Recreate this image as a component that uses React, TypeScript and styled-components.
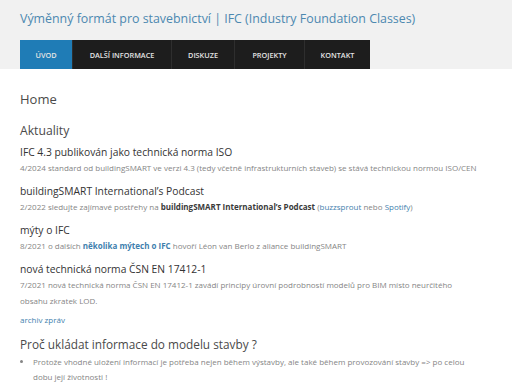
import React from "react";
import styled, { createGlobalStyle } from "styled-components";

const Global = createGlobalStyle`
  html, body { margin: 0; padding: 0; background: #fff; }
  body { font-family: "Open Sans", "Liberation Sans", sans-serif; }
`;

const Header = styled.header`
  background: #f1f1f1;
  padding: 9px 20px 0 20px;
`;

const SiteTitle = styled.h1`
  margin: 0;
  font-weight: 400;
  font-size: 12.4px;
  line-height: 20px;
  color: #4c88b0;
  white-space: nowrap;
`;

const Nav = styled.nav`
  display: flex;
  margin-top: 11px;
  width: fit-content;
  background: #1d1d1d;
`;

const NavItem = styled.a<{ $active?: boolean; $w: number }>`
  display: flex;
  align-items: center;
  justify-content: center;
  width: ${(p) => p.$w}px;
  height: 29px;
  box-sizing: border-box;
  font-size: 7.3px;
  font-weight: 600;
  color: #e4e4e4;
  background: ${(p) => (p.$active ? "#1f7cb6" : "#1d1d1d")};
  border-left: 1px solid ${(p) => (p.$active ? "#1f7cb6" : "#2e2e2e")};
  &:first-child { border-left: none; }
`;

const Main = styled.main`
  padding: 21px 32px 0 20px;
`;

const H2 = styled.h2<{ $mt?: number; $size?: number }>`
  margin: ${(p) => p.$mt ?? 0}px 0 0 0;
  font-weight: 400;
  font-size: ${(p) => p.$size ?? 13}px;
  line-height: 18px;
  color: #4a4a4a;
`;

const NewsTitle = styled.h3<{ $mt?: number }>`
  margin: ${(p) => p.$mt ?? 0}px 0 0 0;
  font-weight: 400;
  font-size: 10.3px;
  line-height: 14px;
  color: #333;
`;

const NewsText = styled.p`
  margin: 1px 0 0 0;
  font-size: 8px;
  line-height: 16px;
  color: #858585;
`;

const Link = styled.a<{ $bold?: boolean }>`
  color: #3f7fae;
  text-decoration: none;
  font-weight: ${(p) => (p.$bold ? 700 : 400)};
`;

const Strong = styled.b`
  color: #3a3a3a;
  font-weight: 700;
`;

const Archive = styled.p`
  margin: 3px 0 0 0;
  font-size: 8px;
  line-height: 16px;
`;

const List = styled.ul`
  margin: 1px 0 0 0;
  padding-left: 13px;
  font-size: 8px;
  line-height: 15px;
  color: #858585;
`;

const navItems = [
  { label: "ÚVOD", w: 52, active: true },
  { label: "DALŠÍ INFORMACE", w: 99 },
  { label: "DISKUZE", w: 63 },
  { label: "PROJEKTY", w: 70 },
  { label: "KONTAKT", w: 66 },
];

export default function App() {
  return (
    <>
      <Global />
      <Header>
        <SiteTitle>Výměnný formát pro stavebnictví | IFC (Industry Foundation Classes)</SiteTitle>
        <Nav>
          {navItems.map((n) => (
            <NavItem key={n.label} $active={n.active} $w={n.w}>
              {n.label}
            </NavItem>
          ))}
        </Nav>
      </Header>
      <Main>
        <H2>Home</H2>
        <H2 $mt={14} $size={12.2}>Aktuality</H2>
        <NewsTitle $mt={5}>IFC 4.3 publikován jako technická norma ISO</NewsTitle>
        <NewsText>
          4/2024 standard od buildingSMART ve verzi 4.3 (tedy včetně infrastrukturních staveb) se stává technickou normou ISO/CEN
        </NewsText>
        <NewsTitle $mt={8}>buildingSMART International’s Podcast</NewsTitle>
        <NewsText>
          2/2022 sledujte zajímavé postřehy na <Strong>buildingSMART International’s Podcast</Strong> (
          <Link>buzzsprout</Link> nebo <Link>Spotify</Link>)
        </NewsText>
        <NewsTitle $mt={8}>mýty o IFC</NewsTitle>
        <NewsText>
          8/2021 o dalších <Link $bold>několika mýtech o IFC</Link> hovoří Léon van Berlo z aliance buildingSMART
        </NewsText>
        <NewsTitle $mt={8}>nová technická norma ČSN EN 17412-1</NewsTitle>
        <NewsText>
          7/2021 nová technická norma ČSN EN 17412-1 zavádí principy úrovní podrobností modelů pro BIM místo neurčitého obsahu zkratek LOD.
        </NewsText>
        <Archive>
          <Link>archiv zpráv</Link>
        </Archive>
        <H2 $mt={7} $size={11.8}>Proč ukládat informace do modelu stavby ?</H2>
        <List>
          <li>
            Protože vhodné uložení informací je potřeba nejen během výstavby, ale také během provozování stavby =&gt; po celou dobu její životnosti !
          </li>
        </List>
      </Main>
    </>
  );
}
